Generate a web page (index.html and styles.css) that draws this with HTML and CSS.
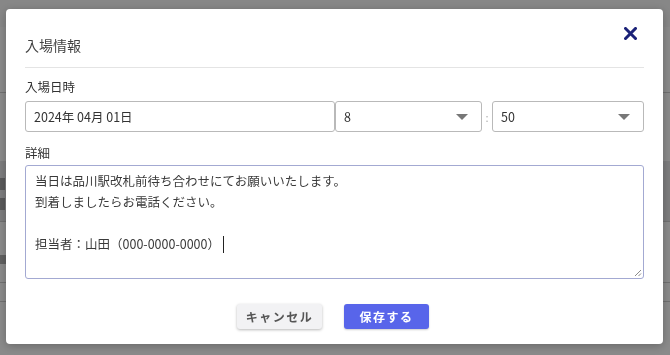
FILE: index.html
```html
<!DOCTYPE html>
<html lang="ja">
<head>
<meta charset="utf-8">
<title>入場情報</title>
<link rel="stylesheet" href="styles.css">
</head>
<body>
<div class="page">
  <div class="bg-head"></div>
  <div class="bg-sec"></div>
  <div class="bg-band"><i class="bg-mark"></i><i class="bg-mark"></i></div>
  <div class="bg-row"><i class="bg-mark small"></i></div>
  <div class="bg-row short"></div>
</div>
<div class="overlay">
  <div class="modal">
    <div class="modal-header">
      <h2 class="title">入場情報</h2>
      <button class="close" aria-label="閉じる">
        <svg width="13" height="13" viewBox="0 0 13 13"><path d="M1.5 1.5 L11.5 11.5 M11.5 1.5 L1.5 11.5" stroke="#1b2278" stroke-width="3" stroke-linecap="square" fill="none"/></svg>
      </button>
    </div>
    <div class="modal-body">
      <div class="label">入場日時</div>
      <div class="datetime">
        <div class="field">2024年 04月 01日</div>
        <div class="field select"><span>8</span><i class="arrow"></i></div>
        <span class="colon">:</span>
        <div class="field select"><span>50</span><i class="arrow"></i></div>
      </div>
      <div class="label label-detail">詳細</div>
      <div class="textarea">
        <div class="line">当日は品川駅改札前待ち合わせにてお願いいたします。</div>
        <div class="line">到着しましたらお電話ください。</div>
        <div class="line">&nbsp;</div>
        <div class="line">担当者：山田（000-0000-0000）<span class="caret"></span></div>
        <svg class="grip" width="8" height="8" viewBox="0 0 8 8"><path d="M7 1 L1 7 M7 4.5 L4.5 7" stroke="#8a8a8a" stroke-width="1" fill="none"/></svg>
      </div>
    </div>
    <div class="modal-footer">
      <button class="btn cancel">キャンセル</button>
      <button class="btn save">保存する</button>
    </div>
  </div>
</div>
</body>
</html>
```
FILE: styles.css
```css
* { box-sizing: border-box; }
html, body { margin: 0; padding: 0; }
body {
  width: 670px;
  height: 355px;
  overflow: hidden;
  font-family: "Noto Sans CJK JP", "Noto Sans", sans-serif;
  background: #ffffff;
  position: relative;
}
.page { width: 670px; height: 355px; }
.bg-head { height: 27px; background: #fafafa; }
.bg-sec { height: 66px; border-bottom: 1px solid #cfcfcf; }
.bg-band {
  margin-top: 68px;
  height: 61px;
  background: #e6e6e8;
  border-bottom: 1px solid #cfcfcf;
  padding-top: 17px;
  display: flex;
  flex-direction: column;
  gap: 8px;
}
.bg-mark { display: block; width: 5px; height: 12px; background: #555; opacity: 0.45; }
.bg-mark.small { width: 6px; height: 9px; }
.bg-row { height: 61px; border-bottom: 1px solid #cfcfcf; padding-top: 33px; }
.bg-row.short { height: 19px; padding: 0; }

.overlay {
  position: fixed;
  inset: 0;
  background: rgba(0, 0, 0, 0.46);
  padding: 9px 7px 11px 6px;
  display: flex;
}
.modal {
  flex: 1;
  background: #fff;
  border-radius: 4px;
  padding: 0 19px;
  position: relative;
  display: flex;
  flex-direction: column;
  box-shadow: 0 2px 10px rgba(0,0,0,0.25);
}
.modal-header {
  padding: 26px 0 12px;
  border-bottom: 1px solid #e4e4e4;
}
.title {
  margin: 0;
  font-size: 14px;
  line-height: 20px;
  font-weight: 400;
  color: #444;
}
.close {
  position: absolute;
  top: 18px;
  right: 26px;
  width: 13px;
  height: 13px;
  padding: 0;
  border: 0;
  background: none;
  display: flex;
}
.modal-body { padding-top: 10px; }
.label {
  font-size: 12.5px;
  line-height: 18px;
  color: #333;
}
.label-detail { margin-top: 12px; }
.datetime {
  margin-top: 5px;
  display: grid;
  grid-template-columns: 310px 147px 10px 1fr;
  align-items: center;
}
.field {
  height: 31px;
  border: 1px solid #b9b9b9;
  border-radius: 3px;
  padding: 0 8px;
  display: flex;
  align-items: center;
  font-size: 12.5px;
  color: #333;
}
.select { justify-content: space-between; padding-right: 13px; }
.arrow {
  width: 0;
  height: 0;
  border-left: 6px solid transparent;
  border-right: 6px solid transparent;
  border-top: 6px solid #777;
}
.colon {
  text-align: center;
  font-size: 11px;
  color: #aaa;
}
.textarea {
  margin-top: 3px;
  height: 114px;
  border: 1px solid #a3a9d2;
  border-radius: 3px;
  padding: 4px 9px;
  font-size: 12.5px;
  line-height: 21px;
  color: #3a3a3a;
  position: relative;
}
.line { white-space: nowrap; }
.caret {
  display: inline-block;
  width: 1px;
  height: 17px;
  background: #222;
  vertical-align: -4px;
  margin-left: 3px;
}
.grip { position: absolute; right: 1px; bottom: 1px; }
.modal-footer {
  margin-top: 25px;
  display: flex;
  justify-content: center;
  gap: 22px;
  padding-right: 3px;
}
.btn {
  width: 85px;
  height: 25px;
  border: 0;
  border-radius: 3px;
  font-family: inherit;
  font-size: 12px;
  font-weight: 700;
  letter-spacing: 1.5px;
  padding: 0;
}
.cancel {
  background: #f2f2f4;
  color: #555;
  box-shadow: 0 1px 3px rgba(0,0,0,0.28);
}
.save {
  background: #5865ea;
  color: #fff;
  box-shadow: 0 1px 2px rgba(0,0,0,0.2);
}
```
